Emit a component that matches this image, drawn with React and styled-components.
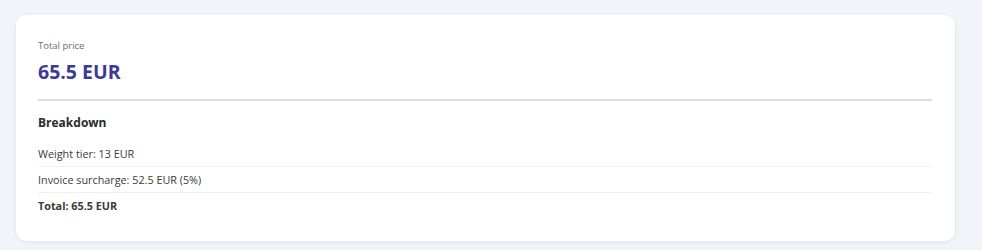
import React from 'react'
import styled, { createGlobalStyle } from 'styled-components'

const GlobalStyle = createGlobalStyle`
  body {
    margin: 0;
    background: #f1f4f8;
    font-family: "Open Sans", "Noto Sans", sans-serif;
  }
`

const Page = styled.div`
  padding: 15px 27px 9px 16px;
`

const Card = styled.div`
  background: #ffffff;
  border-radius: 10px;
  box-shadow: 0 1px 4px rgba(30, 40, 60, 0.08);
  padding: 24px 23px 23px 22px;
`

const Label = styled.div`
  font-size: 9.5px;
  color: #6b6b6b;
  line-height: 14px;
`

const Price = styled.div`
  margin-top: 6px;
  font-size: 19.5px;
  font-weight: 700;
  color: #3d3a96;
  line-height: 26px;
`

const Divider = styled.hr`
  border: none;
  border-top: 2px solid #dedede;
  margin: 14px 0 12px;
`

const Heading = styled.div`
  font-size: 12px;
  font-weight: 700;
  color: #2a2a2a;
  line-height: 20px;
  margin-bottom: 8px;
`

const Row = styled.div`
  font-size: 10.8px;
  line-height: 15px;
  padding: 5px 0;
  color: #3a3a3a;
  font-weight: ${({ bold }) => (bold ? 700 : 400)};
  border-bottom: ${({ last }) => (last ? 'none' : '1px solid #f2f2f2')};
`

const breakdown = [
  'Weight tier: 13 EUR',
  'Invoice surcharge: 52.5 EUR (5%)',
]

export default function App() {
  return (
    <Page>
      <GlobalStyle />
      <Card>
        <Label>Total price</Label>
        <Price>65.5 EUR</Price>
        <Divider />
        <Heading>Breakdown</Heading>
        {breakdown.map((line) => (
          <Row key={line}>{line}</Row>
        ))}
        <Row bold last>Total: 65.5 EUR</Row>
      </Card>
    </Page>
  )
}
